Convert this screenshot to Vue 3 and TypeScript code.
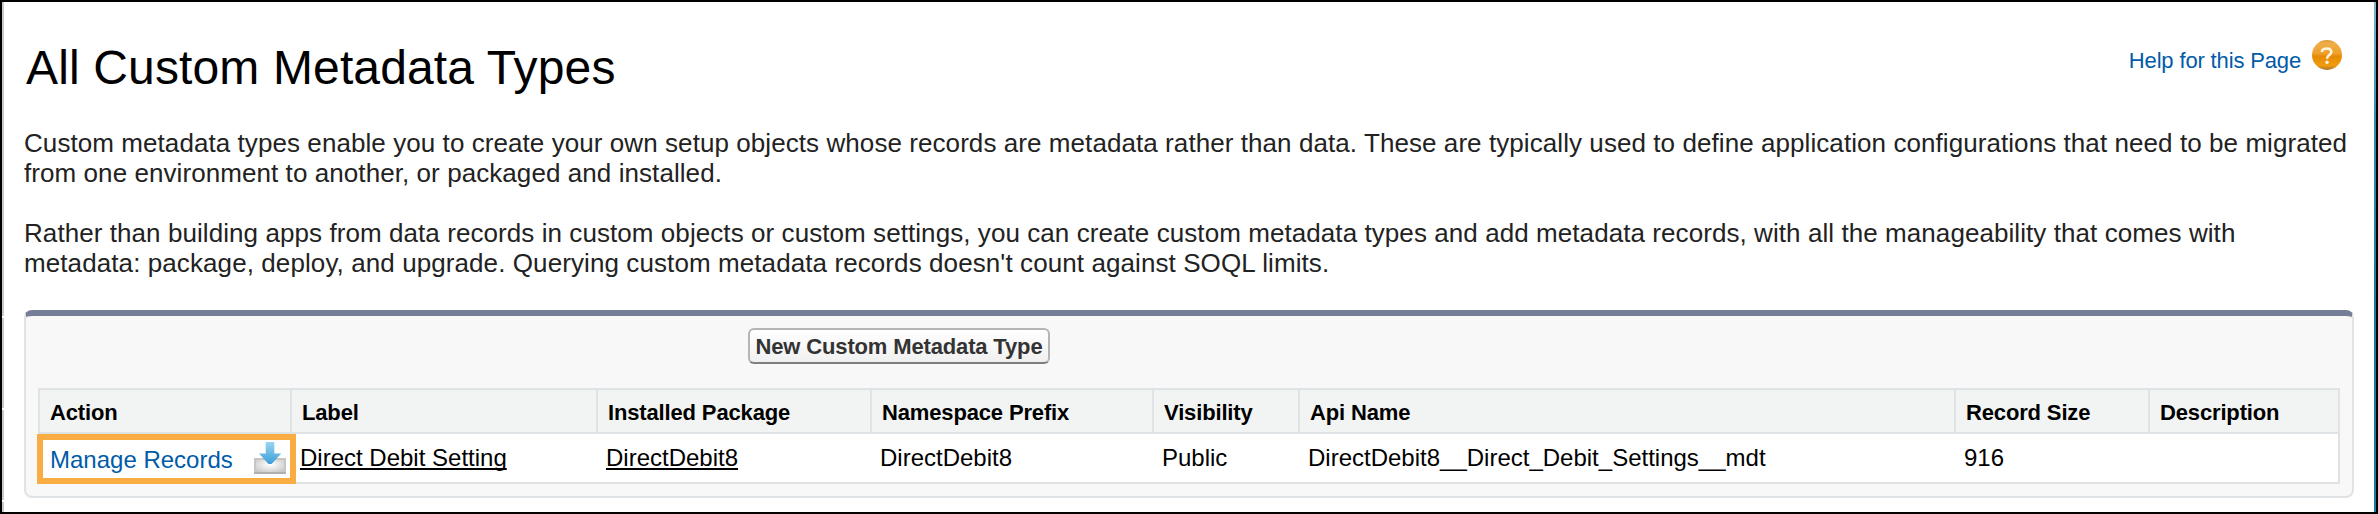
<script setup lang="ts">
interface Column {
  title: string
  value: string
  kind: 'action' | 'link' | 'text'
}

const columns: Column[] = [
  { title: 'Action', value: 'Manage Records', kind: 'action' },
  { title: 'Label', value: 'Direct Debit Setting', kind: 'link' },
  { title: 'Installed Package', value: 'DirectDebit8', kind: 'link' },
  { title: 'Namespace Prefix', value: 'DirectDebit8', kind: 'text' },
  { title: 'Visibility', value: 'Public', kind: 'text' },
  { title: 'Api Name', value: 'DirectDebit8__Direct_Debit_Settings__mdt', kind: 'text' },
  { title: 'Record Size', value: '916', kind: 'text' },
  { title: 'Description', value: '', kind: 'text' },
]
</script>

<template>
  <div class="page">
    <div class="edge-left"><i /><i /><i /><i /></div>
    <main class="content">
      <header class="top">
        <h1>All Custom Metadata Types</h1>
        <a class="help">
          <span>Help for this Page</span>
          <svg width="30" height="30" viewBox="0 0 30 30">
            <defs>
              <linearGradient id="orb" x1="0" y1="0" x2="0" y2="1">
                <stop offset="0" stop-color="#d99a3a" />
                <stop offset="0.12" stop-color="#f0ae48" />
                <stop offset="0.45" stop-color="#eda02c" />
                <stop offset="0.55" stop-color="#e68a04" />
                <stop offset="0.85" stop-color="#f09c10" />
                <stop offset="1" stop-color="#a8752a" />
              </linearGradient>
            </defs>
            <circle cx="15" cy="15" r="15" fill="url(#orb)" />
            <path d="M9.9 12C9.9 9.500 11.800 8.500 14.600 8.500c3 0 4.700 1.300 4.700 3.500 0 3.200-4.300 3-4.300 6.700" fill="none" stroke="#fff4e0" stroke-width="2.600" />
            <circle cx="15" cy="22.300" r="1.700" fill="#fff4e0" />
          </svg>
        </a>
      </header>
      <section class="intro">
        <p>
          <span>Custom metadata types enable you to create your own setup objects whose records are metadata rather than data. These are typically used to define application configurations that need to be migrated</span><br />
          <span>from one environment to another, or packaged and installed.</span>
        </p>
        <p>
          <span>Rather than building apps from data records in custom objects or custom settings, you can create custom metadata types and add metadata records, with all the manageability that comes with</span><br />
          <span class="closing">metadata: package, deploy, and upgrade. Querying custom metadata records doesn't count against SOQL limits.</span>
        </p>
      </section>
      <section class="panel">
        <div class="toolbar">
          <button type="button">New Custom Metadata Type</button>
        </div>
        <div class="grid">
          <div v-for="c in columns" :key="c.title" class="th">{{ c.title }}</div>
          <div v-for="c in columns" :key="c.title + '-value'" class="td" :class="c.kind">
            <template v-if="c.kind === 'action'">
              <a class="manage">{{ c.value }}</a>
              <svg class="download" width="32" height="32" viewBox="0 0 32 32">
                <defs>
                  <radialGradient id="tray" cx="0.5" cy="0.4" r="0.65">
                    <stop offset="0" stop-color="#ffffff" />
                    <stop offset="0.5" stop-color="#e4e4e4" />
                    <stop offset="1" stop-color="#c6c6c6" />
                  </radialGradient>
                  <linearGradient id="arrow" x1="0" y1="0" x2="0" y2="1">
                    <stop offset="0" stop-color="#9ad5f1" />
                    <stop offset="1" stop-color="#3c9fd8" />
                  </linearGradient>
                </defs>
                <path d="M1 17h30v14H1z" fill="url(#tray)" stroke="#c6c6c6" stroke-width="2" />
                <path d="M0 31h32" stroke="#b0b0b0" stroke-width="2" />
                <path d="M11.700 0h8.600v11.500h7L17.500 22h-3L5 11.500h6.700z" fill="url(#arrow)" />
              </svg>
            </template>
            <span v-else>{{ c.value }}</span>
          </div>
        </div>
      </section>
    </main>
  </div>
</template>

<style scoped>
.page {
  box-sizing: border-box;
  width: 2378px;
  height: 514px;
  display: flex;
  border: 2px solid #000;
  background: #fff;
  overflow: hidden;
  font-family: "Liberation Sans", Arial, sans-serif;
  color: #000;
  white-space: nowrap;
}
.page::after {
  content: "";
  width: 2px;
  background: linear-gradient(#7fb8cb 0, #2e8eae 120px, #147fa3 300px);
}
.edge-left {
  width: 2px;
  display: grid;
  grid-template-rows: 314px 90px 90px 10px;
  row-gap: 2px;
}
.edge-left i {
  background: #c9c9c9;
}
.content {
  flex: 1;
  padding: 0 20px;
}
.top {
  height: 126px;
  display: flex;
  justify-content: space-between;
}
h1 {
  margin: 38px 0 0 2px;
  font-size: 48px;
  line-height: 56px;
  font-weight: 400;
  letter-spacing: 0.14px;
}
.help {
  margin: 38px 12px 0 0;
  display: flex;
  gap: 11px;
  height: 30px;
  color: #015ba7;
  font-size: 22px;
  line-height: 42px;
  letter-spacing: -0.15px;
}
.intro p {
  margin: 0 0 30px;
  font-size: 26px;
  line-height: 30px;
  letter-spacing: 0.071px;
  color: #222;
}
.intro .closing {
  letter-spacing: 0.09px;
}
.panel {
  box-sizing: border-box;
  height: 188px;
  margin-top: 32px;
  border: 2px solid #e0e3e5;
  border-top: 6px solid #747e96;
  border-radius: 8px;
  background: #f8f8f8;
  padding: 0 12px;
}
.toolbar {
  height: 72px;
  padding: 12px 0 0 710px;
  box-sizing: border-box;
}
button {
  display: block;
  box-sizing: border-box;
  width: 302px;
  height: 36px;
  padding: 0;
  border: 2px solid #b5b5b5;
  border-bottom-color: #7f7f7f;
  border-radius: 6px;
  background: linear-gradient(#fff, #f0f0f0);
  color: #333;
  font: bold 22px/33px "Liberation Sans", Arial, sans-serif;
  letter-spacing: -0.15px;
}
.grid {
  box-sizing: border-box;
  height: 96px;
  display: grid;
  grid-template-columns: 252px 306px 274px 282px 146px 656px 194px 190px;
  grid-template-rows: 44px 50px;
  border: solid #e0e3e5;
  border-width: 2px 0 0 2px;
  background: #fff;
}
.th,
.td {
  box-sizing: border-box;
  border-bottom: 2px solid #e0e3e5;
}
.th {
  border-right: 2px solid #e0e3e5;
  background: #f2f4f3;
  padding-left: 10px;
  font-size: 22px;
  line-height: 46px;
  height: 44px;
  font-weight: 700;
  letter-spacing: -0.15px;
}
.td {
  padding-left: 8px;
  font-size: 24px;
  line-height: 48px;
}
.td:last-child {
  border-right: 2px solid #e0e3e5;
}
.td.link span {
  text-decoration: underline;
  text-decoration-thickness: 2px;
  text-decoration-skip-ink: none;
  text-underline-offset: 2px;
}
.td.action {
  width: 259px;
  height: 50px;
  margin-left: -3px;
  padding: 0 4px 0 7px;
  border: 6px solid #f8ac42;
  display: flex;
  justify-content: space-between;
  position: relative;
}
.manage {
  color: #015ba7;
  line-height: 39px;
}
.download {
  margin-top: 2px;
}
</style>
